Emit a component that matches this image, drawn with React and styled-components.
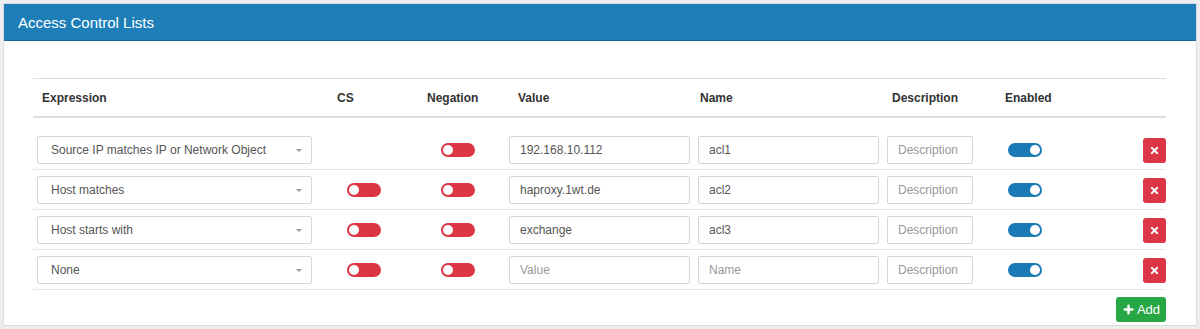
import React from "react";
import styled, { createGlobalStyle } from "styled-components";
import { X, Plus } from "lucide-react";

const GlobalStyle = createGlobalStyle`
    body {
        margin: 0;
        background: #eceef0;
        font-family: "Liberation Sans", Arial, sans-serif;
    }
`;

const Page = styled.div`
    padding: 3px 3px 3px 3px;
`;

const Card = styled.div`
    background: #fff;
    border: 1px solid #dcdcdc;
`;

const CardHeader = styled.div`
    height: 36px;
    display: flex;
    align-items: center;
    padding-left: 14px;
    background: #1e7fb8;
    border-bottom: 1px solid #17699a;
    color: #fff;
    font-size: 15px;
`;

const CardBody = styled.div`
    padding: 37px 30px 3px 29px;
`;

const Table = styled.div`
    border-top: 1px solid #dedede;
`;

const columns = "296px 90px 86px 189px 189px 94px 123px 66px";

const HeadRow = styled.div`
    display: grid;
    grid-template-columns: ${columns};
    height: 39px;
    padding-top: 1px;
    box-sizing: border-box;
    align-items: center;
    border-bottom: 2px solid #dedede;
`;

const HeadCell = styled.div`
    padding-left: ${props => props.$pad}px;
    font-size: 12px;
    font-weight: bold;
    color: #333;
`;

const Row = styled.div`
    display: grid;
    grid-template-columns: ${columns};
    align-items: center;
    padding: ${props => (props.$first ? "18px 0 5px" : "6px 0 5px")};
    border-bottom: 1px solid #e6e6e6;
`;

const Cell = styled.div`
    display: flex;
    align-items: center;
    justify-content: ${props => (props.$end ? "flex-end" : "flex-start")};
    padding-left: ${props => props.$pad || 0}px;
`;

const SelectBox = styled.div`
    box-sizing: border-box;
    width: 275px;
    height: 28px;
    display: flex;
    align-items: center;
    justify-content: space-between;
    padding: 0 9px 0 13px;
    border: 1px solid #d6d6d6;
    border-radius: 2px;
    font-size: 12px;
    color: #555;
`;

const Caret = styled.span`
    width: 0;
    height: 0;
    border-left: 3px solid transparent;
    border-right: 3px solid transparent;
    border-top: 3px solid #999;
`;

const Input = styled.input`
    box-sizing: border-box;
    width: ${props => props.$w}px;
    height: 28px;
    padding: 0 10px;
    border: 1px solid #d6d6d6;
    border-radius: 2px;
    font-family: "Liberation Sans", Arial, sans-serif;
    font-size: 12px;
    color: #555;
    outline: none;

    &::placeholder {
        color: #999;
    }
`;

const Toggle = styled.span`
    position: relative;
    display: inline-block;
    width: 34px;
    height: 14px;
    border-radius: 7px;
    background: ${props => (props.$on ? "#1b7ab6" : "#dc3545")};

    &::after {
        content: "";
        position: absolute;
        top: 2px;
        left: ${props => (props.$on ? "22px" : "2px")};
        width: 10px;
        height: 10px;
        border-radius: 50%;
        background: #fff;
    }
`;

const DeleteButton = styled.button`
    width: 23px;
    height: 25px;
    padding: 0;
    display: flex;
    align-items: center;
    justify-content: center;
    border: none;
    border-radius: 3px;
    background: #dc3545;
    color: #fff;
`;

const Footer = styled.div`
    display: flex;
    justify-content: flex-end;
    padding-top: 7px;
`;

const AddButton = styled.button`
    height: 25px;
    width: 50px;
    padding: 0;
    display: flex;
    align-items: center;
    justify-content: center;
    gap: 2px;
    border: none;
    border-radius: 3px;
    background: #28a745;
    color: #fff;
    font-family: "Liberation Sans", Arial, sans-serif;
    font-size: 13px;
`;

const headers = [
    ["Expression", 9],
    ["CS", 8],
    ["Negation", 8],
    ["Value", 13],
    ["Name", 6],
    ["Description", 9],
    ["Enabled", 28],
    ["", 0]
];

const rows = [
    { expr: "Source IP matches IP or Network Object", cs: false, value: "192.168.10.112", name: "acl1" },
    { expr: "Host matches", cs: true, value: "haproxy.1wt.de", name: "acl2" },
    { expr: "Host starts with", cs: true, value: "exchange", name: "acl3" },
    { expr: "None", cs: true, value: "", name: "" }
];

export default function App() {
    return (
        <Page>
            <GlobalStyle />
            <Card>
                <CardHeader>Access Control Lists</CardHeader>
                <CardBody>
                    <Table>
                        <HeadRow>
                            {headers.map(([label, pad], i) => (
                                <HeadCell key={i} $pad={pad}>
                                    {label}
                                </HeadCell>
                            ))}
                        </HeadRow>
                        {rows.map((row, i) => (
                            <Row key={row.expr} $first={i === 0}>
                                <Cell $pad={4}>
                                    <SelectBox>
                                        {row.expr}
                                        <Caret />
                                    </SelectBox>
                                </Cell>
                                <Cell $pad={18}>{row.cs && <Toggle />}</Cell>
                                <Cell $pad={22}>
                                    <Toggle />
                                </Cell>
                                <Cell $pad={4}>
                                    <Input $w={181} defaultValue={row.value} placeholder="Value" />
                                </Cell>
                                <Cell $pad={4}>
                                    <Input $w={181} defaultValue={row.name} placeholder="Name" />
                                </Cell>
                                <Cell $pad={4}>
                                    <Input $w={86} placeholder="Description" />
                                </Cell>
                                <Cell $pad={31}>
                                    <Toggle $on />
                                </Cell>
                                <Cell $end>
                                    <DeleteButton>
                                        <X size={11} strokeWidth={4} />
                                    </DeleteButton>
                                </Cell>
                            </Row>
                        ))}
                    </Table>
                    <Footer>
                        <AddButton>
                            <Plus size={13} strokeWidth={4.5} />
                            Add
                        </AddButton>
                    </Footer>
                </CardBody>
            </Card>
        </Page>
    );
}
